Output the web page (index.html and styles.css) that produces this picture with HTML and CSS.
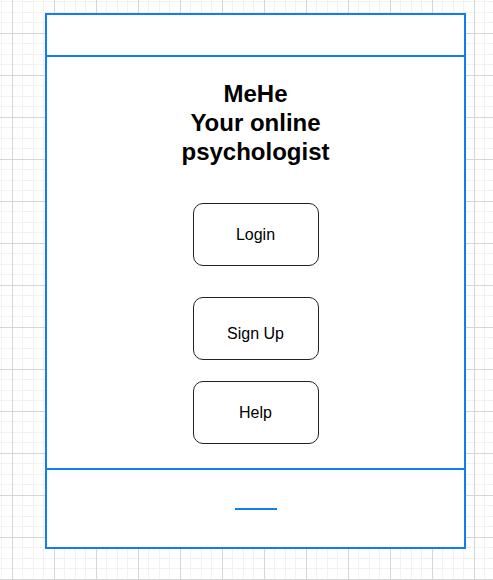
FILE: index.html
```html
<!DOCTYPE html>
<html lang="en">
<head>
<meta charset="utf-8">
<title>MeHe</title>
<link rel="stylesheet" href="styles.css">
</head>
<body>
<div class="phone">
  <header class="phone-header"></header>
  <main class="phone-main">
    <h1 class="title">MeHe<br>Your online<br>psychologist</h1>
    <div class="btn btn-login">Login</div>
    <div class="btn btn-signup">Sign Up</div>
    <div class="btn btn-help">Help</div>
  </main>
  <footer class="phone-footer">
    <div class="home-bar"></div>
  </footer>
</div>
</body>
</html>
```

FILE: styles.css
```css
html, body {
  margin: 0;
  padding: 0;
}
body {
  width: 493px;
  height: 580px;
  overflow: hidden;
  font-family: "Liberation Sans", Arial, sans-serif;
  background-color: #ffffff;
  background-image:
    linear-gradient(to right, #d6d6d6 0 1px, transparent 1px),
    linear-gradient(to bottom, #d6d6d6 0 1px, transparent 1px),
    linear-gradient(to right, transparent 0 10px, #f1f1f1 10px 11px, transparent 11px 21px, #f1f1f1 21px 22px, transparent 22px 31px, #f1f1f1 31px 32px, transparent 32px),
    linear-gradient(to bottom, transparent 0 10px, #f1f1f1 10px 11px, transparent 11px 21px, #f1f1f1 21px 22px, transparent 22px 31px, #f1f1f1 31px 32px, transparent 32px);
  background-size: 42px 42px;
  background-position: 12px 33px;
}
.phone {
  box-sizing: border-box;
  margin: 13px 0 0 45px;
  width: 421px;
  height: 536px;
  border: 2px solid #0d7ff0;
  background: #ffffff;
  display: flex;
  flex-direction: column;
}
.phone-header {
  height: 40px;
  border-bottom: 2px solid #0d7ff0;
  flex: none;
}
.phone-main {
  flex: 1;
  display: flex;
  flex-direction: column;
  align-items: center;
  padding-top: 22px;
}
.title {
  margin: 0;
  font-size: 24px;
  line-height: 29px;
  font-weight: bold;
  text-align: center;
  color: #000;
}
.btn {
  box-sizing: border-box;
  width: 126px;
  height: 63px;
  border: 1px solid #222;
  border-radius: 10px;
  display: flex;
  align-items: center;
  justify-content: center;
  font-size: 16px;
  line-height: 18px;
  color: #000;
}
.btn-login {
  margin-top: 37px;
}
.btn-signup {
  margin-top: 31px;
  padding-top: 10px;
}
.btn-help {
  margin-top: 21px;
}
.phone-footer {
  height: 77px;
  border-top: 2px solid #0d7ff0;
  flex: none;
  display: flex;
  justify-content: center;
}
.home-bar {
  margin-top: 38px;
  width: 42px;
  height: 2px;
  background: #0d7ff0;
}
```
